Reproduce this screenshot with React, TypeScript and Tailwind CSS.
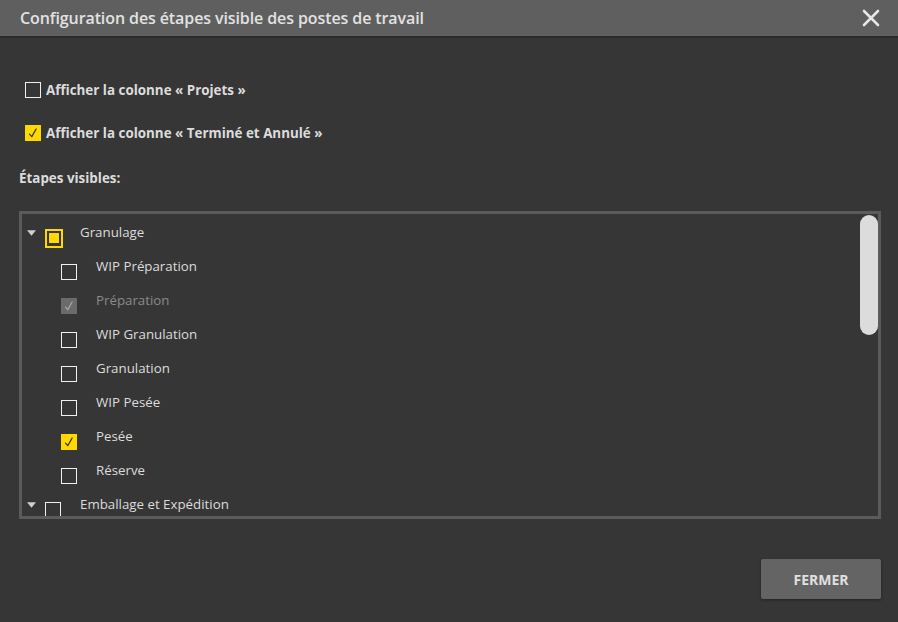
import React from "react";

type Step = { label: string; checked?: boolean; disabled?: boolean };

const steps: Step[] = [
  { label: "WIP Préparation" },
  { label: "Préparation", checked: true, disabled: true },
  { label: "WIP Granulation" },
  { label: "Granulation" },
  { label: "WIP Pesée" },
  { label: "Pesée", checked: true },
  { label: "Réserve" },
];

function Check({ color }: { color: string }) {
  return (
    <svg viewBox="0 0 16 16" className="h-[14px] w-[14px]" fill="none">
      <path d="M4 9.2 L6.6 12.2 L11.6 3.4" stroke={color} strokeWidth="1.4" strokeLinecap="round" strokeLinejoin="round" />
    </svg>
  );
}

function Box({ checked, disabled }: { checked?: boolean; disabled?: boolean }) {
  if (disabled) {
    return (
      <span className="flex h-4 w-4 shrink-0 items-center justify-center bg-[#6b6b6b]">
        <Check color="#a8a8a8" />
      </span>
    );
  }
  if (checked) {
    return (
      <span className="flex h-4 w-4 shrink-0 items-center justify-center bg-[#ffd800]">
        <Check color="#3a3300" />
      </span>
    );
  }
  return <span className="h-4 w-4 shrink-0 border border-[#f0f0f0]" />;
}

function Caret() {
  return (
    <svg viewBox="0 0 10 6" className="mb-[10px] h-[6px] w-[9px] shrink-0">
      <path d="M0 0 L10 0 L5 6 Z" fill="#cfcfcf" />
    </svg>
  );
}

export default function App() {
  return (
    <div className="flex h-[622px] w-[898px] flex-col bg-[#363636] text-[#dcdcdc]" style={{ fontFamily: '"Open Sans", "Noto Sans", sans-serif' }}>
      <header className="flex h-[38px] shrink-0 items-center justify-between border-b-2 border-[#2b2b2b] bg-[#5f5f5f] pl-5 pr-[18px]">
        <h1 className="text-[16px] font-semibold leading-none tracking-[-0.1px] text-[#e2e2e2]">Configuration des étapes visible des postes de travail</h1>
        <svg viewBox="0 0 18 18" className="h-[18px] w-[18px]">
          <path d="M2 2 L16 16 M16 2 L2 16" stroke="#e6e6e6" strokeWidth="2.6" strokeLinecap="round" />
        </svg>
      </header>

      <div className="flex flex-1 flex-col pl-[19px] pr-[17px]">
        <label className="mt-[42px] flex h-5 items-center gap-[5px] pl-[6px] text-[13.4px] font-bold">
          <Box />
          <span>Afficher la colonne « Projets »</span>
        </label>
        <label className="mt-[23px] flex h-5 items-center gap-[5px] pl-[6px] text-[13.4px] font-bold">
          <Box checked />
          <span>Afficher la colonne « Terminé et Annulé »</span>
        </label>
        <p className="mt-[25px] flex h-5 items-center text-[13.4px] font-bold">Étapes visibles:</p>

        <div className="relative mt-[23px] h-[308px] shrink-0 overflow-hidden border-[3px] border-[#5b5b5b] text-[13.3px]">
          <div className="pt-[7px]">
            <div className="flex h-[34px] items-center">
              <span className="ml-[5px]"><Caret /></span>
              <span className="ml-[9px] flex h-[19px] w-[18px] shrink-0 items-center justify-center border-2 border-[#ffd800]">
                <span className="h-[10px] w-[10px] bg-[#ffd800]" />
              </span>
              <span className="mb-[10px] ml-[17px]">Granulage</span>
            </div>
            {steps.map((s) => (
              <div key={s.label} className="flex h-[34px] items-center pl-[39px]">
                <Box checked={s.checked} disabled={s.disabled} />
                <span className={`mb-[10px] ml-[19px] ${s.disabled ? "text-[#8a8a8a]" : ""}`}>{s.label}</span>
              </div>
            ))}
            <div className="flex h-[34px] items-center">
              <span className="ml-[5px]"><Caret /></span>
              <span className="ml-[9px] h-4 w-4 shrink-0 border border-[#f0f0f0]" />
              <span className="mb-[10px] ml-[19px]">Emballage et Expédition</span>
            </div>
          </div>
          <div className="absolute right-0 top-[1px] h-[120px] w-[18px] rounded-full bg-[#dcdcdc]" />
        </div>

        <div className="mt-[40px] flex justify-end">
          <button className="h-10 w-[120px] rounded-[2px] bg-[#646464] text-[14px] font-bold text-[#e0e0e0] shadow-[0_1px_3px_rgba(0,0,0,0.4)]">FERMER</button>
        </div>
      </div>
    </div>
  );
}
